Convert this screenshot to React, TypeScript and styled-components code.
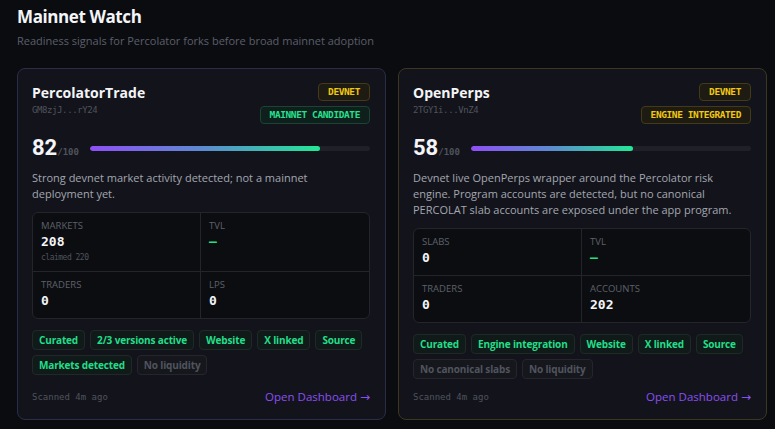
import React from 'react';
import styled, { createGlobalStyle } from 'styled-components';

const GlobalStyle = createGlobalStyle`
  html, body {
    margin: 0;
    padding: 0;
    background: #0b0c10;
  }
  body {
    font-family: 'Open Sans', 'Liberation Sans', sans-serif;
    color: #e6e8ee;
  }
`;

const MONO = `'DejaVu Sans Mono', 'Liberation Mono', monospace`;

type Tone = 'yellow' | 'green';

interface Stat {
  label: string;
  value: string;
  sub?: string;
  accent?: boolean;
}

interface Fork {
  name: string;
  address: string;
  network: string;
  status: string;
  statusTone: Tone;
  score: number;
  description: string;
  stats: Stat[];
  tags: { label: string; ok: boolean }[];
  scanned: string;
  border: string;
}

const forks: Fork[] = [
  {
    name: 'PercolatorTrade',
    address: 'GM8zjJ...rY24',
    network: 'DEVNET',
    status: 'MAINNET CANDIDATE',
    statusTone: 'green',
    score: 82,
    description:
      'Strong devnet market activity detected; not a mainnet deployment yet.',
    stats: [
      { label: 'Markets', value: '208', sub: 'claimed 220' },
      { label: 'TVL', value: '—', accent: true },
      { label: 'Traders', value: '0' },
      { label: 'LPs', value: '0' },
    ],
    tags: [
      { label: 'Curated', ok: true },
      { label: '2/3 versions active', ok: true },
      { label: 'Website', ok: true },
      { label: 'X linked', ok: true },
      { label: 'Source', ok: true },
      { label: 'Markets detected', ok: true },
      { label: 'No liquidity', ok: false },
    ],
    scanned: 'Scanned 4m ago',
    border: '#2b2c47',
  },
  {
    name: 'OpenPerps',
    address: '2TGY1i...VnZ4',
    network: 'DEVNET',
    status: 'ENGINE INTEGRATED',
    statusTone: 'yellow',
    score: 58,
    description:
      'Devnet live OpenPerps wrapper around the Percolator risk engine. Program accounts are detected, but no canonical PERCOLAT slab accounts are exposed under the app program.',
    stats: [
      { label: 'Slabs', value: '0' },
      { label: 'TVL', value: '—', accent: true },
      { label: 'Traders', value: '0' },
      { label: 'Accounts', value: '202' },
    ],
    tags: [
      { label: 'Curated', ok: true },
      { label: 'Engine integration', ok: true },
      { label: 'Website', ok: true },
      { label: 'X linked', ok: true },
      { label: 'Source', ok: true },
      { label: 'No canonical slabs', ok: false },
      { label: 'No liquidity', ok: false },
    ],
    scanned: 'Scanned 4m ago',
    border: '#3b3720',
  },
];

export default function App() {
  return (
    <Page>
      <GlobalStyle />
      <Title>Mainnet Watch</Title>
      <Subtitle>Readiness signals for Percolator forks before broad mainnet adoption</Subtitle>
      <Grid>
        {forks.map((fork) => (
          <ForkCard key={fork.name} fork={fork} />
        ))}
      </Grid>
    </Page>
  );
}

const ForkCard: React.FC<{ fork: Fork }> = ({ fork }) => (
  <Card $border={fork.border}>
    <CardHeader>
      <div>
        <CardName>{fork.name}</CardName>
        <Address>{fork.address}</Address>
      </div>
      <Badges>
        <Badge $tone="yellow">{fork.network}</Badge>
        <Badge $tone={fork.statusTone}>{fork.status}</Badge>
      </Badges>
    </CardHeader>

    <ScoreRow>
      <Score>
        {fork.score}
        <ScoreMax>/100</ScoreMax>
      </Score>
      <Track>
        <Fill style={{ width: `${fork.score}%` }} />
      </Track>
    </ScoreRow>

    <Description>{fork.description}</Description>

    <Stats>
      {fork.stats.map((s) => (
        <StatCell key={s.label}>
          <StatLabel>{s.label}</StatLabel>
          <StatValue $accent={s.accent}>{s.value}</StatValue>
          {s.sub && <StatSub>{s.sub}</StatSub>}
        </StatCell>
      ))}
    </Stats>

    <Tags>
      {fork.tags.map((t) => (
        <Tag key={t.label} $ok={t.ok}>
          {t.label}
        </Tag>
      ))}
    </Tags>

    <Footer>
      <Scanned>{fork.scanned}</Scanned>
      <DashLink href="#">
        Open Dashboard <Arrow>→</Arrow>
      </DashLink>
    </Footer>
  </Card>
);

const Page = styled.div`
  padding: 5px 8px 10px 17px;
`;

const Title = styled.h1`
  margin: 0;
  font-size: 17px;
  font-weight: 700;
  letter-spacing: -0.4px;
  color: #f4f5f8;
  line-height: 24px;
`;

const Subtitle = styled.p`
  margin: 4px 0 0;
  font-size: 11px;
  color: #5b5f6b;
  line-height: 16px;
`;

const Grid = styled.div`
  display: grid;
  grid-template-columns: 369px 369px;
  gap: 12px;
  margin-top: 19px;
`;

const Card = styled.div<{ $border: string }>`
  display: flex;
  flex-direction: column;
  padding: 14px 15px 14px 14px;
  background: #13141b;
  border: 1px solid ${(p) => p.$border};
  border-radius: 8px;
`;

const CardHeader = styled.div`
  display: flex;
  justify-content: space-between;
  align-items: flex-start;
`;

const CardName = styled.div`
  font-size: 14px;
  font-weight: 700;
  color: #f4f5f8;
  line-height: 18px;
  margin-top: 1px;
`;

const Address = styled.div`
  font-family: ${MONO};
  font-size: 9px;
  letter-spacing: -0.4px;
  line-height: 12px;
  color: #4f535c;
  margin-top: 2px;
`;

const Badges = styled.div`
  display: flex;
  flex-direction: column;
  align-items: flex-end;
  gap: 5px;
`;

const Badge = styled.span<{ $tone: Tone }>`
  font-family: ${MONO};
  font-size: 9.5px;
  font-weight: 700;
  letter-spacing: -0.4px;
  padding: 2px 9px;
  line-height: 12px;
  border-radius: 4px;
  color: ${(p) => (p.$tone === 'yellow' ? '#f2c811' : '#27e08e')};
  background: ${(p) => (p.$tone === 'yellow' ? '#1d1b12' : '#0f1f1b')};
  border: 1px solid ${(p) => (p.$tone === 'yellow' ? '#443b16' : '#1c4434')};
`;

const ScoreRow = styled.div`
  display: flex;
  align-items: center;
  gap: 10px;
  margin-top: 11px;
  height: 26px;
`;

const Score = styled.div`
  flex-shrink: 0;
  width: 48px;
  font-family: 'Roboto', 'Liberation Sans', sans-serif;
  font-size: 22px;
  font-weight: 700;
  color: #f4f5f8;
  line-height: 26px;
  white-space: nowrap;
`;

const ScoreMax = styled.span`
  font-family: ${MONO};
  font-size: 9px;
  font-weight: 700;
  line-height: 1;
  color: #4f535c;
`;

const Track = styled.div`
  flex: 1;
  height: 5px;
  border-radius: 3px;
  background: #1f2028;
  overflow: hidden;
`;

const Fill = styled.div`
  height: 100%;
  border-radius: 3px;
  background: linear-gradient(90deg, #8f4ff7, #5c8cd0 50%, #22e896);
`;

const Description = styled.p`
  margin: 9px 0 0;
  font-size: 11px;
  line-height: 16px;
  color: #a3a7b0;
`;

const Stats = styled.div`
  display: grid;
  grid-template-columns: 1fr 1fr;
  margin-top: 10px;
  background: #0c0d11;
  border: 1px solid #24252c;
  border-radius: 6px;
  overflow: hidden;
`;

const StatCell = styled.div`
  padding: 7px 8px 7px;
  border-right: 1px solid #24252c;
  border-bottom: 1px solid #24252c;

  &:nth-child(2n) {
    border-right: none;
  }
  &:nth-last-child(-n + 2) {
    border-bottom: none;
  }
`;

const StatLabel = styled.div`
  font-size: 9.5px;
  text-transform: uppercase;
  color: #5d616a;
  line-height: 12px;
`;

const StatValue = styled.div<{ $accent?: boolean }>`
  font-family: ${MONO};
  font-size: 13px;
  font-weight: 700;
  line-height: 20px;
  color: ${(p) => (p.$accent ? '#22e07f' : '#f4f5f8')};
`;

const StatSub = styled.div`
  font-family: ${MONO};
  font-size: 8px;
  letter-spacing: -0.5px;
  color: #4f535c;
  line-height: 12px;
`;

const Tags = styled.div`
  display: flex;
  flex-wrap: wrap;
  gap: 5px;
  margin-top: 11px;
`;

const Tag = styled.span<{ $ok: boolean }>`
  font-size: 10px;
  font-weight: 700;
  letter-spacing: -0.15px;
  line-height: 12px;
  padding: 3px 6px;
  border-radius: 4px;
  color: ${(p) => (p.$ok ? '#22de8a' : '#50545d')};
  background: ${(p) => (p.$ok ? '#101a18' : '#16171d')};
  border: 1px solid ${(p) => (p.$ok ? '#1f2a27' : '#25262d')};
`;

const Footer = styled.div`
  display: flex;
  justify-content: space-between;
  align-items: center;
  margin-top: auto;
  padding-top: 10px;
  line-height: 16px;
`;

const Scanned = styled.span`
  font-family: ${MONO};
  font-size: 9px;
  color: #4f535c;
`;

const DashLink = styled.a`
  font-size: 11.5px;
  color: #8b4ff5;
  text-decoration: none;
`;

const Arrow = styled.span`
  font-family: 'DejaVu Sans', sans-serif;
  font-size: 12px;
`;
